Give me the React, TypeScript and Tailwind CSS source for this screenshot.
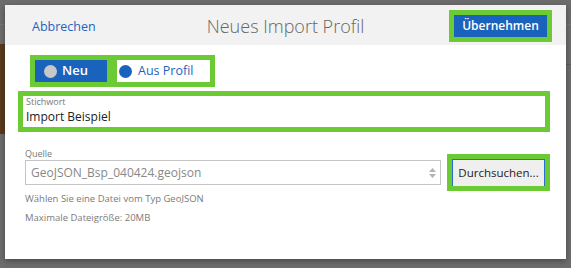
import React from "react";

const font = { fontFamily: '"Open Sans", "Noto Sans", sans-serif' };

function RadioDot({ color }: { color: string }) {
  return <span className={`inline-block h-[13px] w-[13px] rounded-full ${color}`} />;
}

export default function App() {
  return (
    <div
      style={font}
      className="relative h-[268px] w-[571px] overflow-hidden bg-[#6d6d6d] px-[5px] pt-[5px]"
    >
      {/* page behind the overlay */}
      <div className="absolute left-0 top-[24px] h-px w-full bg-[#777]" />
      <div className="absolute right-0 top-[64px] h-px w-[6px] bg-[#5c5c5c]" />
      <div className="absolute left-0 top-[44px] h-[90px] w-[5px] bg-[#5a3a1c]" />

      {/* Dialog */}
      <div className="relative flex h-[254px] w-[561px] flex-col bg-white shadow-[0_2px_6px_rgba(0,0,0,0.35)]">
        {/* Header */}
        <div className="grid h-[40px] grid-cols-[1fr_auto_1fr] items-start bg-[#f2f2f2]">
          <div className="pl-[27px] pt-[13px] text-[12.5px] leading-[18px] text-[#1d63be]">Abbrechen</div>
          <div className="pt-[8px] text-[18px] font-light leading-[26px] text-[#666]">Neues Import Profil</div>
          <div className="flex justify-end pr-[14px] pt-[5px]">
            <div className="bg-[#6ccb34] p-[5px]">
              <button
                type="button"
                className="flex h-[22px] w-[93px] items-center justify-center bg-[#1a63bd] text-[12px] font-semibold text-white"
              >
                Übernehmen
              </button>
            </div>
          </div>
        </div>

        {/* Body */}
        <div className="flex flex-col px-[13px] pt-[10px]">
          <div className="ml-[12px] flex w-[185px] gap-[10px] bg-[#6ccb34] p-[5px]">
            <button
              type="button"
              className="flex h-[22px] w-[72px] items-center gap-[3px] bg-[#1a63bd] pl-[9px] text-[13px] font-semibold text-white"
            >
              <RadioDot color="bg-[#c8c8c8]" />
              <span className="ml-[2px]">Neu</span>
            </button>
            <button
              type="button"
              className="flex h-[22px] w-[93px] items-center gap-[6px] bg-white pl-[2px] text-[12.5px] font-medium text-[#1d63be]"
            >
              <RadioDot color="bg-[#1a63bd]" />
              <span>Aus Profil</span>
            </button>
          </div>

          <div className="mt-[4px] w-[532px] bg-[#6ccb34] p-[5px]">
            <div className="flex h-[31px] flex-col bg-white pl-[3px]">
              <span className="text-[9px] leading-[12px] text-[#777]">Stichwort</span>
              <span className="text-[12px] leading-[17px] text-[#222]">Import Beispiel</span>
            </div>
          </div>

          <div className="mt-[16px] flex items-start">
            <div className="ml-[7px] flex w-[416px] flex-col">
              <span className="text-[9px] leading-[11px] text-[#777]">Quelle</span>
              <div className="mt-[1px] flex h-[25px] items-center justify-between border border-[#c4c4c4] pl-[5px] pr-[4px]">
                <span className="text-[12px] text-[#888]">GeoJSON_Bsp_040424.geojson</span>
                <span className="flex flex-col items-center gap-[2px]">
                  <svg width="7" height="4" viewBox="0 0 7 4">
                    <path d="M0 4 L3.5 0 L7 4 Z" fill="#b3b3b3" />
                  </svg>
                  <svg width="7" height="4" viewBox="0 0 7 4">
                    <path d="M0 0 L3.5 4 L7 0 Z" fill="#b3b3b3" />
                  </svg>
                </span>
              </div>
            </div>
            <div className="ml-[6px] mt-[6px] bg-[#6ccb34] p-[5px]">
              <button
                type="button"
                className="flex h-[27px] w-[93px] items-center justify-center border border-b-0 border-[#2a6fd0] bg-[#efefef] text-[11.5px] text-[#222]"
              >
                Durchsuchen...
              </button>
            </div>
          </div>

          <div className="ml-[7px] mt-[1px] text-[9.5px] leading-[13px] text-[#7a7a7a]">
            Wählen Sie eine Datei vom Typ GeoJSON
          </div>
          <div className="ml-[7px] mt-[6px] text-[9.5px] leading-[13px] text-[#7a7a7a]">
            Maximale Dateigröße: 20MB
          </div>
        </div>
      </div>
    </div>
  );
}
